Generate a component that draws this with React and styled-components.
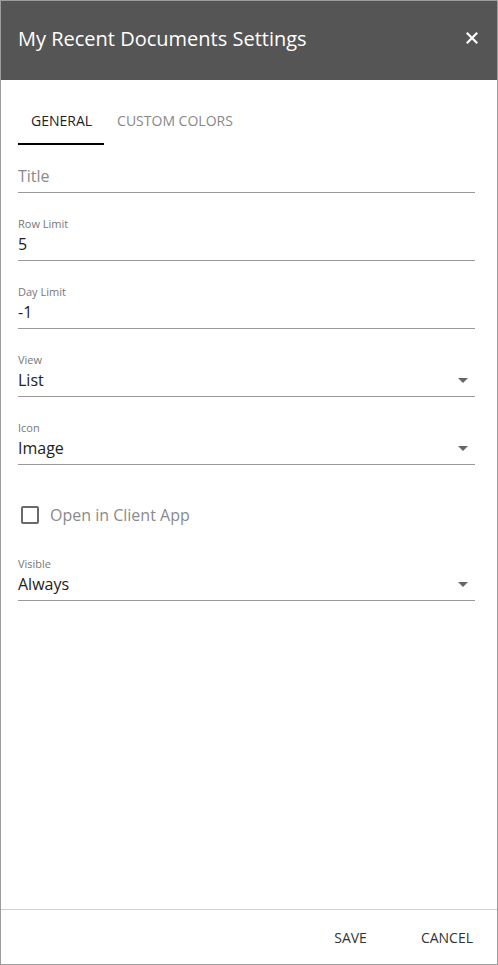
import React, { useState } from 'react';
import styled, { createGlobalStyle } from 'styled-components';

const GlobalStyle = createGlobalStyle`
  html, body {
    margin: 0;
    padding: 0;
    background: #ffffff;
  }
  body {
    font-family: "Open Sans", "Liberation Sans", sans-serif;
  }
`;

const Dialog = styled.div`
  box-sizing: border-box;
  width: 498px;
  height: 965px;
  border: 1px solid #9c9c9c;
  display: flex;
  flex-direction: column;
  background: #ffffff;
`;

const Header = styled.div`
  height: 79px;
  background: #555555;
  display: flex;
  align-items: center;
  justify-content: space-between;
  padding: 0 19px 5px 17px;
  box-sizing: border-box;
  flex-shrink: 0;
`;

const Title = styled.h1`
  margin: 0;
  font-size: 20px;
  font-weight: 400;
  color: #ffffff;
`;

const CloseButton = styled.button`
  border: none;
  background: none;
  padding: 0;
  width: 12px;
  height: 12px;
  display: flex;
  cursor: pointer;
`;

const Body = styled.div`
  flex: 1;
  padding: 19px 22px 0 17px;
`;

const Tabs = styled.div`
  display: flex;
`;

const Tab = styled.button`
  border: none;
  background: none;
  font-family: inherit;
  font-size: 14px;
  text-transform: uppercase;
  padding: 12px 12px 13px 13px;
  color: ${(p) => (p.active ? '#222222' : '#888888')};
  border-bottom: 2px solid ${(p) => (p.active ? '#000000' : 'transparent')};
  cursor: pointer;
`;

const Form = styled.div`
  padding-top: 20px;
  display: flex;
  flex-direction: column;
  gap: 25px;
`;

const Field = styled.div`
  display: flex;
  flex-direction: column;
  border-bottom: 1px solid #9a9a9a;
  padding-bottom: 5px;
`;

const Label = styled.span`
  font-size: 11px;
  line-height: 12px;
  margin-bottom: 3px;
  color: #777777;
`;

const Value = styled.div`
  display: flex;
  align-items: center;
  justify-content: space-between;
  font-size: 16px;
  line-height: 22px;
  color: ${(p) => (p.placeholder ? '#8a8a8a' : '#222222')};
`;

const Arrow = styled.span`
  width: 0;
  height: 0;
  margin-right: 7px;
  border-left: 5px solid transparent;
  border-right: 5px solid transparent;
  border-top: 5px solid #666666;
`;

const CheckRow = styled.label`
  box-sizing: border-box;
  display: flex;
  align-items: center;
  gap: 11px;
  height: 43px;
  padding: 7px 0 0 3px;
  font-size: 16px;
  color: #8a8a8a;
  cursor: pointer;
`;

const Box = styled.span`
  box-sizing: border-box;
  width: 18px;
  height: 18px;
  border: 2px solid #6a6a6a;
  border-radius: 2px;
`;

const Footer = styled.div`
  height: 54px;
  border-top: 1px solid #d0d0d0;
  display: flex;
  align-items: center;
  justify-content: flex-end;
  gap: 38px;
  padding: 0 16px 0 0;
  flex-shrink: 0;
`;

const FooterButton = styled.button`
  border: none;
  background: none;
  font-family: inherit;
  font-size: 14px;
  color: #333333;
  padding: 0 8px;
  cursor: pointer;
`;

function TextField({ label, value, placeholder }) {
  return (
    <Field>
      {label && <Label>{label}</Label>}
      <Value placeholder={placeholder ? 1 : undefined}>{value || placeholder}</Value>
    </Field>
  );
}

function SelectField({ label, value }) {
  return (
    <Field>
      <Label>{label}</Label>
      <Value>
        {value}
        <Arrow />
      </Value>
    </Field>
  );
}

export default function App() {
  const [tab, setTab] = useState('general');

  return (
    <>
      <GlobalStyle />
      <Dialog>
        <Header>
          <Title>My Recent Documents Settings</Title>
          <CloseButton aria-label="Close">
            <svg width="12" height="12" viewBox="0 0 12 12">
              <path d="M1.5 1.5 L10.5 10.5 M10.5 1.5 L1.5 10.5" stroke="#fff" strokeWidth="2.2" strokeLinecap="square" />
            </svg>
          </CloseButton>
        </Header>
        <Body>
          <Tabs>
            <Tab active={tab === 'general' ? 1 : 0} onClick={() => setTab('general')}>General</Tab>
            <Tab active={tab === 'colors' ? 1 : 0} onClick={() => setTab('colors')}>Custom Colors</Tab>
          </Tabs>
          <Form>
            <TextField placeholder="Title" />
            <TextField label="Row Limit" value="5" />
            <TextField label="Day Limit" value="-1" />
            <SelectField label="View" value="List" />
            <SelectField label="Icon" value="Image" />
            <CheckRow>
              <Box />
              Open in Client App
            </CheckRow>
            <SelectField label="Visible" value="Always" />
          </Form>
        </Body>
        <Footer>
          <FooterButton>SAVE</FooterButton>
          <FooterButton>CANCEL</FooterButton>
        </Footer>
      </Dialog>
    </>
  );
}
